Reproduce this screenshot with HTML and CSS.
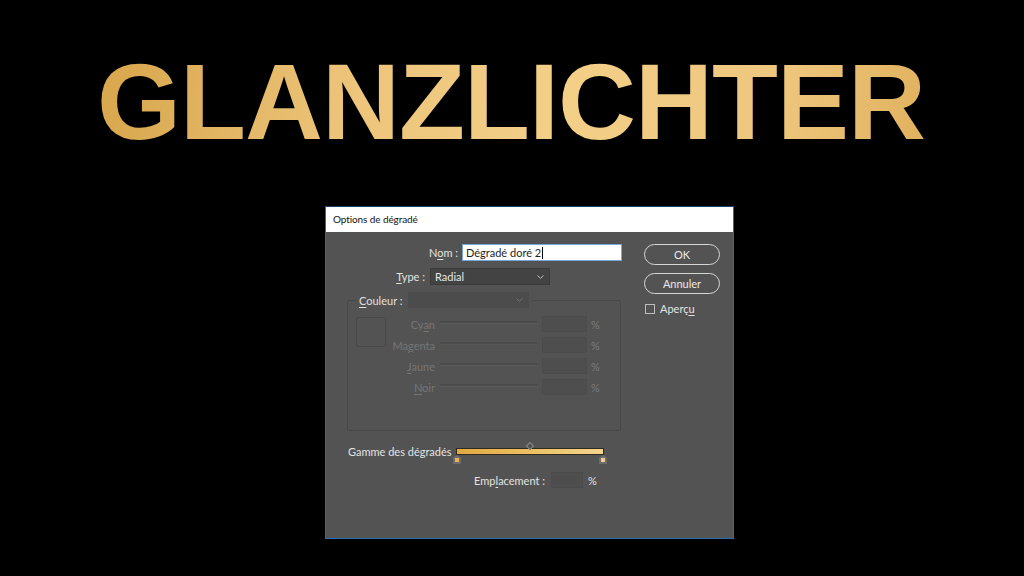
FILE: index.html
```html
<!DOCTYPE html>
<html lang="fr">
<head>
    <meta charset="UTF-8">
    <meta name="viewport" content="width=device-width, initial-scale=1.0">
    <title>Glanzlichter</title>
    <link rel="stylesheet" href="styles.css">
</head>
<body>
    <div class="page">
        <!-- titre doré -->
        <h1 class="headline">GLANZLICHTER</h1>

        <!-- la boîte de dialogue -->
        <div class="dialog">
            <div class="titlebar">Options de dégradé</div>
            <div class="content">
                <div class="form">
                    <div class="row row-nom">
                        <label>N<u>o</u>m :</label>
                        <div class="field active">Dégradé doré 2<span class="caret"></span></div>
                    </div>
                    <div class="row row-type">
                        <label><u>T</u>ype :</label>
                        <div class="select">
                            <span>Radial</span>
                            <svg class="chevron" width="7" height="4" viewBox="0 0 7 4"><path d="M0.5 0.5 L3.5 3.3 L6.5 0.5" fill="none" stroke="#bdbdbd" stroke-width="1"/></svg>
                        </div>
                    </div>

                    <fieldset class="color">
                        <legend>
                            <span class="legend-text"><u>C</u>ouleur :</span>
                            <span class="select off">
                                <span></span>
                                <svg class="chevron" width="7" height="4" viewBox="0 0 7 4"><path d="M0.5 0.5 L3.5 3.3 L6.5 0.5" fill="none" stroke="#727272" stroke-width="1"/></svg>
                            </span>
                        </legend>
                        <div class="color-body">
                            <div class="swatch"></div>
                            <div class="channels">
                                <span class="lbl">Cy<u>a</u>n</span><span class="track"></span><span class="num"></span><span class="pct">%</span>
                                <span class="lbl">Ma<u>g</u>enta</span><span class="track"></span><span class="num"></span><span class="pct">%</span>
                                <span class="lbl"><u>J</u>aune</span><span class="track"></span><span class="num"></span><span class="pct">%</span>
                                <span class="lbl"><u>N</u>oir</span><span class="track"></span><span class="num"></span><span class="pct">%</span>
                            </div>
                        </div>
                    </fieldset>

                    <div class="ramp-row">
                        <span class="ramp-label">Gamme des dégradés</span>
                        <div class="ramp">
                            <span class="midpoint"></span>
                            <span class="stop stop-left"><i></i></span>
                            <span class="stop stop-right"><i></i></span>
                        </div>
                    </div>

                    <div class="row row-loc">
                        <label>Emp<u>l</u>acement :</label>
                        <div class="num loc-num"></div>
                        <span class="loc-pct">%</span>
                    </div>
                </div>

                <div class="side">
                    <button class="btn">OK</button>
                    <button class="btn">Annuler</button>
                    <div class="check"><span class="check-box"></span>Aperç<u>u</u></div>
                </div>
            </div>
        </div>
    </div>
</body>
</html>
```

FILE: styles.css
```css
* {
  margin: 0;
  padding: 0;
  box-sizing: border-box;
}
html, body {
  background: #000;
}
.page {
  width: 1024px;
  height: 576px;
  overflow: hidden;
}
.headline {
  margin-top: 48px;
  height: 108px;
  font: bold 108px/108px "Liberation Sans", Arial, sans-serif;
  letter-spacing: -1px;
  text-align: center;
  padding-right: 2px;
  color: #e8bd6a;
  background: linear-gradient(100deg, #d9a84f 12%, #edc57b 35%, #f3cf88 55%, #eec77e 75%, #dfaf5a 92%);
  -webkit-background-clip: text;
  background-clip: text;
  -webkit-text-fill-color: transparent;
}

/* dialogue */
.dialog {
  margin: 50px 0 0 325px;
  width: 409px;
  height: 333px;
  border: 1px solid #2a6cb3;
  border-top-color: #1d3f66;
  background: #535353;
  font-family: Lato, "Open Sans", sans-serif;
  font-size: 11px;
  color: #e3e3e3;
}
.titlebar {
  height: 25px;
  line-height: 25px;
  padding-left: 7px;
  background: #fff;
  color: #111;
  font-size: 10px;
  letter-spacing: -0.1px;
}
.content {
  display: flex;
  padding-top: 12px;
}
.form {
  width: 296px;
}
u {
  text-decoration: underline;
  text-underline-offset: 2px;
}
.row {
  display: flex;
  align-items: center;
  height: 17px;
}
.row label {
  text-align: right;
}
.row-nom label {
  width: 132px;
  margin-right: 4px;
}
.row-type {
  margin-top: 7px;
}
.row-type label {
  width: 99px;
  margin-right: 5px;
}
.field {
  width: 160px;
  height: 17px;
  line-height: 15px;
  padding-left: 3px;
  background: #fff;
  border: 1px solid #76a7d8;
  color: #1e1e1e;
}
.caret {
  display: inline-block;
  width: 1px;
  height: 12px;
  margin-left: 1px;
  vertical-align: -2px;
  background: #000;
}
.select {
  display: flex;
  align-items: center;
  justify-content: space-between;
  width: 120px;
  height: 17px;
  padding: 0 5px 0 4px;
  background: #434343;
  border: 1px solid #3b3b3b;
  color: #e6e6e6;
}
.select.off {
  width: 121px;
  height: 16px;
  background: #4c4c4c;
  border-color: #4c4c4c;
}

/* groupe couleur */
.color {
  margin: 7px 0 0 21px;
  width: 274px;
  height: 139px;
  border: 1px solid #484848;
  border-radius: 2px;
  padding: 0;
}
.color legend {
  display: flex;
  align-items: center;
  margin-left: 9px;
  padding: 0 2px;
}
.legend-text {
  margin-right: 5px;
  color: #e0e0e0;
}
.color-body {
  display: flex;
  padding-top: 8px;
}
.swatch {
  width: 30px;
  height: 30px;
  margin: 1px 0 0 8px;
  border: 1px solid #484848;
  border-radius: 2px;
}
.channels {
  display: grid;
  grid-template-columns: 49px 97px 45px auto;
  grid-auto-rows: 16px;
  column-gap: 5px;
  row-gap: 5px;
  align-items: center;
  color: #757575;
}
.channels .lbl {
  text-align: right;
}
.track {
  height: 3px;
  margin-top: -3px;
  border-top: 1px solid #494949;
  border-bottom: 1px solid #5a5a5a;
  background: #4d4d4d;
}
.num {
  height: 16px;
  background: #4e4e4e;
  border: 1px solid #4b4b4b;
  border-radius: 1px;
}
.pct {
  margin-left: -1px;
  color: #7a7a7a;
}

/* rampe du dégradé */
.ramp-row {
  display: flex;
  align-items: center;
  margin-top: 17px;
  height: 7px;
}
.ramp-label {
  width: 108px;
  margin-left: 22px;
  white-space: nowrap;
}
.ramp {
  position: relative;
  width: 148px;
  height: 7px;
  border: 1px solid #2e2a22;
  background: linear-gradient(90deg, #e2a940, #ecc266 55%, #f3d48f);
}
.midpoint {
  position: absolute;
  left: 70px;
  top: -6px;
  width: 6px;
  height: 6px;
  border: 1px solid #8a8a8a;
  transform: rotate(45deg);
  background: #535353;
}
.stop {
  position: absolute;
  top: 6px;
  width: 8px;
  height: 9px;
  background: #6d6d6d;
  clip-path: polygon(50% 0, 100% 30%, 100% 100%, 0 100%, 0 30%);
  display: flex;
  align-items: flex-end;
  justify-content: center;
  padding-bottom: 2px;
}
.stop i {
  display: block;
  width: 4px;
  height: 4px;
  background: #e9b34d;
}
.stop-left {
  left: -4px;
}
.stop-right {
  right: -4px;
}
.stop-right i {
  background: #f1cf88;
}

/* emplacement */
.row-loc {
  margin-top: 17px;
  height: 16px;
}
.row-loc label {
  width: 219px;
  margin-right: 6px;
}
.loc-num {
  width: 32px;
}
.loc-pct {
  margin-left: 5px;
}

/* colonne des boutons */
.side {
  margin-left: 22px;
  width: 76px;
}
.btn {
  display: block;
  width: 76px;
  height: 21px;
  margin-bottom: 8px;
  border: 1.5px solid #d6d6d6;
  border-radius: 11px;
  background: transparent;
  color: #eaeaea;
  font: 11px Lato, "Open Sans", sans-serif;
}
.check {
  display: flex;
  align-items: center;
  margin-top: 8px;
  padding-left: 1px;
}
.check-box {
  width: 10px;
  height: 10px;
  margin-right: 5px;
  border: 1px solid #bdbdbd;
}
```
